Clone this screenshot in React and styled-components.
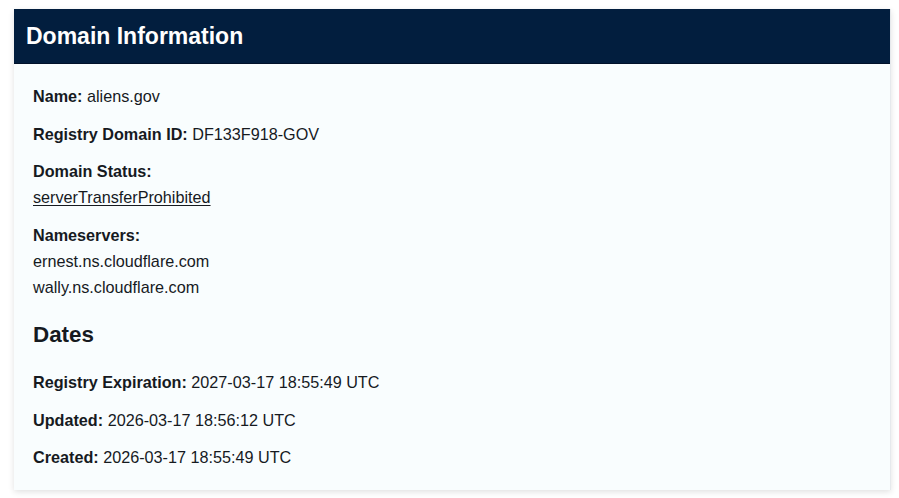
import React from 'react';
import styled, { createGlobalStyle } from 'styled-components';

const GlobalStyle = createGlobalStyle`
  html, body {
    margin: 0;
    background: #ffffff;
    font-family: "Liberation Sans", Arial, sans-serif;
    color: #161a1f;
  }
`;

const Page = styled.div`
  padding: 9px 8px 8px 14px;
`;

const Card = styled.section`
  background: #f9fdfe;
  box-shadow: 0 2px 6px rgba(0, 0, 0, 0.12);
  border-right: 1px solid #e6e9ec;
`;

const Header = styled.header`
  background: #021e3e;
  height: 54px;
  display: flex;
  align-items: center;
  padding: 0 12px;
  border-bottom: 1px solid #01122a;
`;

const Title = styled.h2`
  margin: 0;
  color: #ffffff;
  font-size: 23px;
  font-weight: 700;
`;

const Body = styled.div`
  padding: 19px 19px 20px;
`;

const Row = styled.p`
  margin: 0 0 11.7px;
  font-size: 16.2px;
  line-height: 26px;
  &:last-child {
    margin-bottom: 0;
  }
`;

const Label = styled.strong`
  font-weight: 700;
  display: ${(p) => (p.$block ? 'block' : 'inline')};
`;

const Line = styled.span`
  display: block;
`;

const Link = styled.a`
  color: inherit;
  text-decoration: underline;
  text-underline-offset: 2px;
`;

const SectionTitle = styled.h3`
  margin: 22px 0 21px;
  font-size: 22.4px;
  line-height: 26px;
  font-weight: 700;
`;

const dates = [
  ['Registry Expiration', '2027-03-17 18:55:49 UTC'],
  ['Updated', '2026-03-17 18:56:12 UTC'],
  ['Created', '2026-03-17 18:55:49 UTC'],
];

export default function App() {
  return (
    <Page>
      <GlobalStyle />
      <Card>
        <Header>
          <Title>Domain Information</Title>
        </Header>
        <Body>
          <Row>
            <Label>Name:</Label> aliens.gov
          </Row>
          <Row>
            <Label>Registry Domain ID:</Label> DF133F918-GOV
          </Row>
          <Row>
            <Label $block>Domain Status:</Label>
            <Link href="#">serverTransferProhibited</Link>
          </Row>
          <Row>
            <Label $block>Nameservers:</Label>
            <Line>ernest.ns.cloudflare.com</Line>
            <Line>wally.ns.cloudflare.com</Line>
          </Row>
          <SectionTitle>Dates</SectionTitle>
          {dates.map(([k, v]) => (
            <Row key={k}>
              <Label>{k}:</Label> {v}
            </Row>
          ))}
        </Body>
      </Card>
    </Page>
  );
}
